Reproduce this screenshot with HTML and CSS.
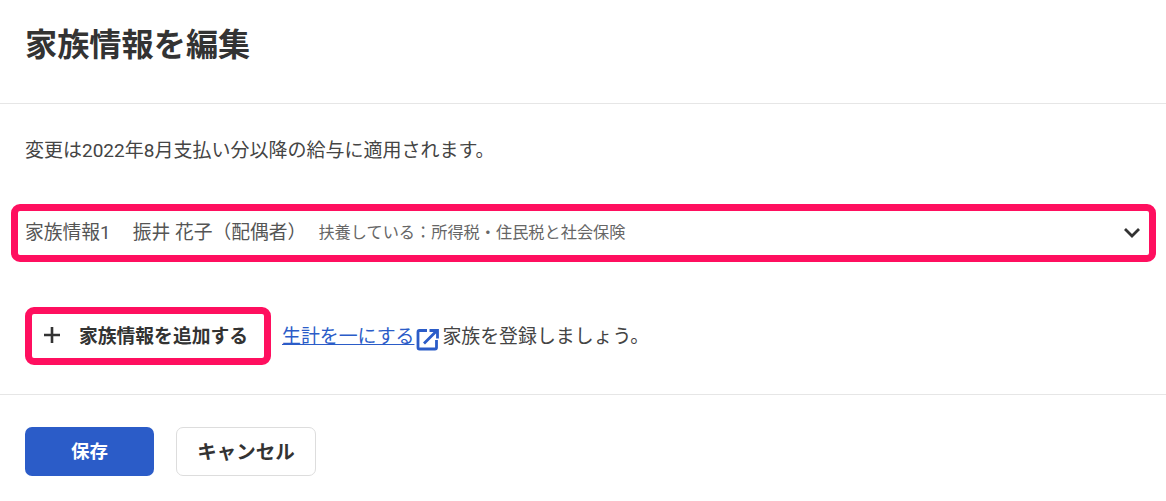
FILE: index.html
```html
<!DOCTYPE html>
<html lang="ja">
<head>
    <meta charset="UTF-8">
    <title>家族情報を編集</title>
    <link rel="stylesheet" href="styles.css">
</head>
<body>
    <header class="page-header">
        <h1>家族情報を編集</h1>
    </header>
    <section class="content">
        <p class="notice">変更は2022年8月支払い分以降の給与に適用されます。</p>
        <div class="family-select highlight">
            <span class="family-label">家族情報1</span>
            <span class="family-name">振井 花子（配偶者）</span>
            <span class="family-note">扶養している：所得税・住民税と社会保険</span>
            <svg class="chevron" width="18" height="12" viewBox="0 0 18 12">
                <path d="M2 2 L9 9 L16 2" fill="none" stroke="#333" stroke-width="2.8"/>
            </svg>
        </div>
        <div class="add-row">
            <button class="add-btn highlight">
                <svg class="plus" width="18" height="18" viewBox="0 0 18 18">
                    <path d="M9 1 V17 M1 9 H17" fill="none" stroke="#333" stroke-width="2.6"/>
                </svg>
                家族情報を追加する
            </button>
            <p class="add-help">
                <a href="#">生計を一にする</a><svg class="ext" width="24" height="24" viewBox="0 0 24 24">
                    <path d="M11 3.5 H3.5 a1.5 1.5 0 0 0 -1.5 1.5 V20.5 a1.5 1.5 0 0 0 1.5 1.5 H19 a1.5 1.5 0 0 0 1.5 -1.5 V13" fill="none" stroke="#2b5cc8" stroke-width="2.8"/>
                    <path d="M8 16.5 L20.5 4 M13.5 3.5 H21.5 V11.5" fill="none" stroke="#2b5cc8" stroke-width="2.8"/>
                </svg>家族を登録しましょう。
            </p>
        </div>
    </section>
    <footer class="actions">
        <button class="btn btn-primary">保存</button>
        <button class="btn btn-cancel">キャンセル</button>
    </footer>
</body>
</html>
```

FILE: styles.css
```css
body {
    margin: 0;
    background-color: #fff;
    color: #444;
    font-family: Roboto, "Noto Sans CJK JP", "Noto Sans", sans-serif;
}
h1 {
    margin: 0;
    font-size: 32.2px;
    line-height: 46px;
    font-weight: 700;
    color: #333;
}
button {
    font-family: inherit;
    cursor: pointer;
}
.page-header {
    height: 104px;
    box-sizing: border-box;
    padding: 22px 25px 0;
    border-bottom: 1px solid #e6e6e6;
}
.content {
    height: 291px;
    box-sizing: border-box;
    border-bottom: 1px solid #e6e6e6;
}
.notice {
    margin: 0;
    padding: 34px 25px 0;
    font-size: 19px;
    line-height: 26px;
}
.highlight {
    border: 7px solid #ff0f5f;
    border-radius: 9px;
    box-sizing: border-box;
    background: #fff;
}
.family-select {
    display: flex;
    align-items: center;
    height: 58px;
    margin: 40px 10px 0 11px;
    padding: 0 8px 5px 7px;
}
.family-label,
.family-name {
    font-size: 18.8px;
    color: #555;
}
.family-name {
    margin-left: 22px;
}
.family-note {
    margin-left: 12px;
    font-size: 16.2px;
    color: #666;
}
.chevron {
    margin-left: auto;
    margin-top: 5px;
}
.add-row {
    display: flex;
    align-items: center;
    margin: 45px 0 0 25px;
}
.add-btn {
    display: flex;
    align-items: center;
    width: 246px;
    height: 58px;
    padding: 0 0 3px 11px;
    font-size: 18.8px;
    font-weight: 700;
    color: #333;
}
.plus {
    margin-right: 18px;
}
.add-help {
    margin: 0 0 0 11px;
    padding-bottom: 4px;
    font-size: 18.9px;
    display: flex;
    align-items: center;
}
.add-help a {
    color: #2b5cc8;
}
.ext {
    margin: 9px 2px 0 2px;
}
.actions {
    display: flex;
    gap: 22px;
    padding: 32px 25px 0;
}
.btn {
    height: 49px;
    padding-bottom: 4px;
    border-radius: 7px;
    font-size: 19.5px;
    font-weight: 700;
    color: #333;
}
.btn-primary {
    width: 129px;
    border: none;
    background-color: #2b5cc8;
    color: #fff;
    font-size: 18.5px;
}
.btn-cancel {
    width: 140px;
    border: 1px solid #ddd;
    background-color: #fff;
}
```
